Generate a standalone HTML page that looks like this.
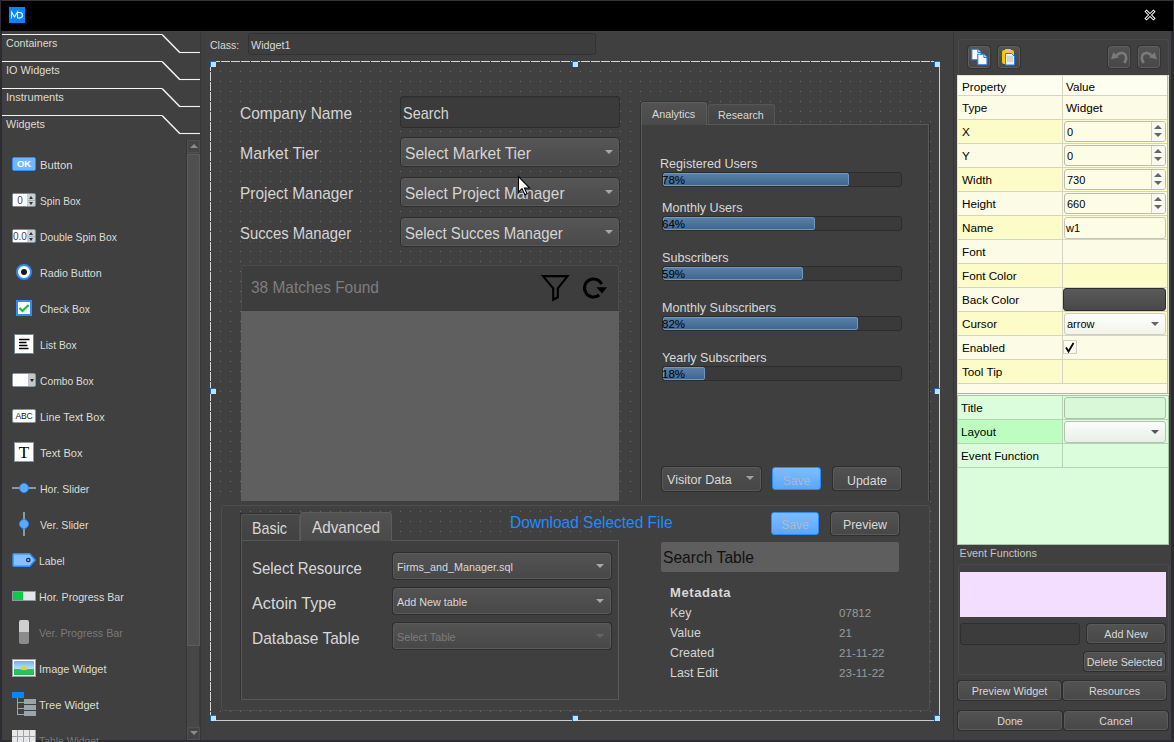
<!DOCTYPE html>
<html><head><meta charset="utf-8">
<style>
*{margin:0;padding:0;box-sizing:border-box}
html,body{width:1174px;height:742px;overflow:hidden;background:#404040;font-family:"Liberation Sans",sans-serif;color:#d6d6d6;position:relative}
.a{position:absolute}
.tx{position:absolute;line-height:1;white-space:nowrap}
svg{overflow:visible}
</style></head><body>
<div class="a" style="left:0px;top:0px;width:1174px;height:742px;background:#404040"></div>
<div class="a" style="left:0px;top:0px;width:1174px;height:1px;background:#34343a"></div>
<div class="a" style="left:0px;top:0px;width:2px;height:742px;background:#2c2c32"></div>
<div class="a" style="left:1171px;top:0px;width:3px;height:742px;background:#2c2c32"></div>
<div class="a" style="left:0px;top:740px;width:1174px;height:2px;background:#2c2c32"></div>
<div class="a" style="left:1px;top:1px;width:1172px;height:30px;background:#000"></div>
<div class="a" style="left:9px;top:7px;width:16px;height:16px;background:#0a84ff"></div>
<svg class="a" style="left:9px;top:7px" width="16" height="16" viewBox="0 0 16 16"><path d="M2.5 11.5V5L5.5 10L8.5 5V11.5M8.5 5.5H10.5Q13.5 5.5 13.5 8.3Q13.5 11 10.5 11H8.5" fill="none" stroke="#fff" stroke-width="1.05"/></svg>
<svg class="a" style="left:1143px;top:8px" width="14" height="14" viewBox="0 0 14 14"><path d="M3.6 3.6L10.4 10.4M10.4 3.6L3.6 10.4" stroke="#fff" stroke-width="3.1" stroke-linecap="square"/><path d="M3.6 3.6L10.4 10.4M10.4 3.6L3.6 10.4" stroke="#000" stroke-width="1.2" stroke-linecap="square"/></svg>
<svg class="a" style="left:0;top:0" width="200" height="140" viewBox="0 0 200 140"><g fill="none" stroke="#f4f4f4"><path d="M2 34.5H162.5" stroke-width="1.1"/><path d="M162.3 34.8L179.5 52.2" stroke-width="1.5"/><path d="M179 52.5H200" stroke-width="1.1"/><path d="M2 61.5H162.5" stroke-width="1.1"/><path d="M162.3 61.8L179.5 79.2" stroke-width="1.5"/><path d="M179 79.5H200" stroke-width="1.1"/><path d="M2 88.5H162.5" stroke-width="1.1"/><path d="M162.3 88.8L179.5 106.2" stroke-width="1.5"/><path d="M179 106.5H200" stroke-width="1.1"/><path d="M2 115.5H162.5" stroke-width="1.1"/><path d="M162.3 115.8L179.5 133.2" stroke-width="1.5"/><path d="M179 133.5H200" stroke-width="1.1"/></g></svg>
<div class="tx" style="left:5.60px;top:37.69px;font-size:11px;color:#dcdcd4;transform:scaleX(0.9664);transform-origin:0 0;">Containers</div>
<div class="tx" style="left:5.60px;top:64.69px;font-size:11px;color:#dcdcd4;transform:scaleX(0.9872);transform-origin:0 0;">IO Widgets</div>
<div class="tx" style="left:5.60px;top:91.69px;font-size:11px;color:#dcdcd4;transform:scaleX(1.0057);transform-origin:0 0;">Instruments</div>
<div class="tx" style="left:5.60px;top:118.69px;font-size:11px;color:#dcdcd4;transform:scaleX(0.9771);transform-origin:0 0;">Widgets</div>
<div class="a" style="left:186px;top:140px;width:14px;height:600px;background:#474747;border-left:1px solid #363636;border-right:1px solid #3a3a3a"></div>
<div class="a" style="left:187px;top:140px;width:13px;height:13px;background:#444;border:1px solid #505050"></div>
<div class="a" style="left:190px;top:144px;width:0;height:0;border-left:4.0px solid transparent;border-right:4.0px solid transparent;border-bottom:4px solid #8c8c8c"></div>
<div class="a" style="left:186px;top:154px;width:1px;height:492px;background:#363636"></div>
<div class="a" style="left:187px;top:154px;width:13px;height:492px;background:#4f4f4f;border:1px solid #5c5c5c"></div>
<div class="a" style="left:187px;top:727px;width:13px;height:13px;background:#444;border:1px solid #505050"></div>
<div class="a" style="left:190px;top:731px;width:0;height:0;border-left:4.0px solid transparent;border-right:4.0px solid transparent;border-top:4px solid #8c8c8c"></div>
<div class="tx" style="left:39.60px;top:159.69px;font-size:11px;color:#dcdcd4;transform:scaleX(1.0192);transform-origin:0 0;">Button</div>
<div class="tx" style="left:39.60px;top:195.69px;font-size:11px;color:#dcdcd4;transform:scaleX(0.9238);transform-origin:0 0;">Spin Box</div>
<div class="tx" style="left:39.60px;top:231.69px;font-size:11px;color:#dcdcd4;transform:scaleX(0.9372);transform-origin:0 0;">Double Spin Box</div>
<div class="tx" style="left:39.60px;top:267.69px;font-size:11px;color:#dcdcd4;transform:scaleX(0.9704);transform-origin:0 0;">Radio Button</div>
<div class="tx" style="left:39.60px;top:303.69px;font-size:11px;color:#dcdcd4;transform:scaleX(0.9382);transform-origin:0 0;">Check Box</div>
<div class="tx" style="left:39.60px;top:339.69px;font-size:11px;color:#dcdcd4;transform:scaleX(0.9385);transform-origin:0 0;">List Box</div>
<div class="tx" style="left:39.60px;top:375.69px;font-size:11px;color:#dcdcd4;transform:scaleX(0.9343);transform-origin:0 0;">Combo Box</div>
<div class="tx" style="left:39.60px;top:411.69px;font-size:11px;color:#dcdcd4;transform:scaleX(0.9828);transform-origin:0 0;">Line Text Box</div>
<div class="tx" style="left:39.60px;top:447.69px;font-size:11px;color:#dcdcd4;transform:scaleX(1.0098);transform-origin:0 0;">Text Box</div>
<div class="tx" style="left:39.60px;top:483.69px;font-size:11px;color:#dcdcd4;transform:scaleX(0.9597);transform-origin:0 0;">Hor. Slider</div>
<div class="tx" style="left:39.60px;top:519.69px;font-size:11px;color:#dcdcd4;transform:scaleX(0.9669);transform-origin:0 0;">Ver. Slider</div>
<div class="tx" style="left:39.10px;top:555.69px;font-size:11px;color:#dcdcd4;transform:scaleX(0.9481);transform-origin:0 0;">Label</div>
<div class="tx" style="left:39.10px;top:591.69px;font-size:11px;color:#dcdcd4;transform:scaleX(0.9708);transform-origin:0 0;">Hor. Progress Bar</div>
<div class="tx" style="left:39.10px;top:627.69px;font-size:11px;color:#7a7a7a;transform:scaleX(0.9723);transform-origin:0 0;">Ver. Progress Bar</div>
<div class="tx" style="left:39.10px;top:663.69px;font-size:11px;color:#dcdcd4;transform:scaleX(0.9945);transform-origin:0 0;">Image Widget</div>
<div class="tx" style="left:39.10px;top:699.69px;font-size:11px;color:#dcdcd4;transform:scaleX(1.0049);transform-origin:0 0;">Tree Widget</div>
<div class="tx" style="left:39.10px;top:735.69px;font-size:11px;color:#7a7a7a;transform:scaleX(0.9437);transform-origin:0 0;">Table Widget</div>
<div class="a" style="left:12px;top:157px;width:24px;height:14px;border:1px solid #2a8cff;border-radius:2px;background:#72b6ff"></div>
<div class="tx" style="left:12px;top:159px;width:24px;text-align:center;font-size:9.5px;font-weight:bold;color:#fff">OK</div>
<div class="a" style="left:12px;top:193px;width:24px;height:14px;border:1px solid #7f8e95;border-radius:2px;background:#c9d1d5"></div>
<div class="a" style="left:13px;top:194px;width:14px;height:12px;background:#fff"></div>
<div class="tx" style="left:13px;top:196px;width:14px;overflow:hidden;text-align:center;font-size:10px;color:#444">0</div>
<div class="a" style="left:29px;top:196px;width:0;height:0;border-left:2.5px solid transparent;border-right:2.5px solid transparent;border-bottom:3px solid #333"></div>
<div class="a" style="left:29px;top:202px;width:0;height:0;border-left:2.5px solid transparent;border-right:2.5px solid transparent;border-top:3px solid #333"></div>
<div class="a" style="left:28px;top:200px;width:7px;height:1px;background:#aab4b8"></div>
<div class="a" style="left:12px;top:229px;width:24px;height:14px;border:1px solid #7f8e95;border-radius:2px;background:#c9d1d5"></div>
<div class="a" style="left:13px;top:230px;width:14px;height:12px;background:#fff"></div>
<div class="tx" style="left:13px;top:232px;width:14px;overflow:hidden;text-align:left;font-size:10px;color:#444">0.0</div>
<div class="a" style="left:29px;top:232px;width:0;height:0;border-left:2.5px solid transparent;border-right:2.5px solid transparent;border-bottom:3px solid #333"></div>
<div class="a" style="left:29px;top:238px;width:0;height:0;border-left:2.5px solid transparent;border-right:2.5px solid transparent;border-top:3px solid #333"></div>
<div class="a" style="left:28px;top:236px;width:7px;height:1px;background:#aab4b8"></div>
<div class="a" style="left:16px;top:264px;width:16px;height:16px;border-radius:50%;border:2px solid #2a8cff;background:#fff"></div>
<div class="a" style="left:21px;top:269px;width:6px;height:6px;border-radius:50%;background:#1a1a1a"></div>
<div class="a" style="left:16px;top:300px;width:16px;height:16px;border:2px solid #2a8cff;background:#fff"></div>
<svg class="a" style="left:16px;top:300px" width="16" height="16"><path d="M3.5 8L6.5 11L12.5 5" fill="none" stroke="#10c040" stroke-width="2.2"/></svg>
<div class="a" style="left:14px;top:334px;width:20px;height:20px;border:1px solid #6f8590;background:#fff"></div>
<svg class="a" style="left:14px;top:334px" width="20" height="20"><g stroke="#000" stroke-width="1.3" stroke-linecap="round"><path d="M5.5 5.5H15"/><path d="M5.5 8.5H12"/><path d="M5.5 11.5H13"/><path d="M5.5 14.5H14"/></g></svg>
<div class="a" style="left:12px;top:373px;width:24px;height:14px;border:1px solid #8a989e;border-radius:2px;background:#c0c8cc"></div>
<div class="a" style="left:13px;top:374px;width:14.5px;height:12px;background:#fff"></div>
<div class="a" style="left:29.5px;top:379px;width:0;height:0;border-left:2.5px solid transparent;border-right:2.5px solid transparent;border-top:3px solid #222"></div>
<div class="a" style="left:12px;top:409px;width:24px;height:14px;border:1px solid #8a989e;border-radius:2px;background:#fff"></div>
<div class="tx" style="left:12px;top:412px;width:24px;text-align:center;font-size:8.6px;letter-spacing:-0.3px;color:#222">ABC</div>
<div class="a" style="left:14px;top:442px;width:20px;height:20px;border:1px solid #8a989e;background:#fff"></div>
<div class="tx" style="left:14px;top:444px;width:20px;text-align:center;font-family:'Liberation Serif',serif;font-size:17px;color:#000">T</div>
<div class="a" style="left:12px;top:487px;width:24px;height:2px;background:#8a9aa0"></div>
<div class="a" style="left:19px;top:483px;width:10px;height:10px;border-radius:50%;background:#5aa9ff;border:1px solid #2a8cff"></div>
<div class="a" style="left:23px;top:512px;width:2px;height:24px;background:#8a9aa0"></div>
<div class="a" style="left:19px;top:519px;width:10px;height:10px;border-radius:50%;background:#5aa9ff;border:1px solid #2a8cff"></div>
<svg class="a" style="left:12px;top:553px" width="25" height="15"><path d="M1 1.5Q1 0.8 1.8 0.8H17.8L23.2 7L17.8 13.2H1.8Q1 13.2 1 12.5Z" fill="#86c0ff" stroke="#2a8cff" stroke-width="1.5" stroke-linejoin="round"/><circle cx="16.3" cy="7" r="1.7" fill="#8cc4ff" stroke="#1a3050" stroke-width="1.3"/></svg>
<div class="a" style="left:12px;top:591px;width:24px;height:10px;border:1px solid #8a9aa0;background:#e4e6e8"></div>
<div class="a" style="left:13px;top:592px;width:10px;height:8px;background:#10c848"></div>
<div class="a" style="left:19px;top:620px;width:10px;height:24px;border-radius:2px;background:linear-gradient(#cfcfcf 50%,#8c8c8c 50%)"></div>
<div class="a" style="left:12px;top:659px;width:24px;height:18px;border:1px solid #9aa4aa;background:#fff"></div>
<div class="a" style="left:14px;top:661px;width:20px;height:14px;background:linear-gradient(#6fb3f5,#bcdcf8 55%,#2ec85a 55%,#20c050)"></div>
<div class="a" style="left:21px;top:666px;width:6px;height:4px;border-radius:3px 3px 0 0;background:#f0d020"></div>
<div class="a" style="left:12px;top:692px;width:12px;height:6px;background:#0a84ff"></div>
<div class="a" style="left:17px;top:698px;width:1px;height:17px;background:#9aa4aa"></div>
<div class="a" style="left:17px;top:702px;width:7px;height:1px;background:#9aa4aa"></div>
<div class="a" style="left:17px;top:708px;width:7px;height:1px;background:#9aa4aa"></div>
<div class="a" style="left:17px;top:714px;width:7px;height:1px;background:#9aa4aa"></div>
<div class="a" style="left:24px;top:699px;width:12px;height:5px;background:#9aa4aa"></div>
<div class="a" style="left:24px;top:705px;width:12px;height:5px;background:#9aa4aa"></div>
<div class="a" style="left:24px;top:711px;width:12px;height:5px;background:#9aa4aa"></div>
<div class="a" style="left:12px;top:730px;width:24px;height:12px;background:repeating-linear-gradient(90deg,#e8e8e8 0 5px,#9aa4aa 5px 6px)"></div>
<div class="a" style="left:12px;top:736px;width:24px;height:1px;background:#9aa4aa"></div>
<div class="a" style="left:200px;top:31px;width:1px;height:709px;background:#363636"></div>
<div class="a" style="left:953px;top:31px;width:1px;height:709px;background:#363636"></div>
<div class="tx" style="left:210px;top:40.11px;font-size:10.5px;color:#d8d8d8;">Class:</div>
<div class="a" style="left:248px;top:33px;width:348px;height:22px;border:1px solid #323232;border-radius:3px;background:#3d3d3d"></div>
<div class="tx" style="left:251px;top:39.86px;font-size:10.8px;color:#d8d8d8;">Widget1</div>
<div class="a" style="left:220px;top:71px;width:719px;height:649px;background-image:radial-gradient(circle at 0.5px 0.5px,#6c6c6c 0.75px,transparent 0.85px);background-size:10px 10px"></div>
<div class="a" style="left:210px;top:61px;width:729px;height:1px;background:repeating-linear-gradient(90deg,transparent 0 1px,#d4d4d4 1px 10px)"></div>
<div class="a" style="left:210px;top:61px;width:1px;height:659px;background:repeating-linear-gradient(180deg,transparent 0 1px,#d4d4d4 1px 10px)"></div>
<div class="a" style="left:939px;top:61px;width:1px;height:660px;background:#cccccc"></div>
<div class="a" style="left:210px;top:720px;width:730px;height:1px;background:#cccccc"></div>
<div class="tx" style="left:240.40px;top:104.61px;font-size:17px;color:#d4d4d4;transform:scaleX(0.9119);transform-origin:0 0;">Company Name</div>
<div class="tx" style="left:240.40px;top:144.61px;font-size:17px;color:#d4d4d4;transform:scaleX(0.9294);transform-origin:0 0;">Market Tier</div>
<div class="tx" style="left:240.40px;top:184.61px;font-size:17px;color:#d4d4d4;transform:scaleX(0.9062);transform-origin:0 0;">Project Manager</div>
<div class="tx" style="left:240.40px;top:224.61px;font-size:17px;color:#d4d4d4;transform:scaleX(0.8724);transform-origin:0 0;">Succes Manager</div>
<div class="a" style="left:400px;top:96px;width:220px;height:32px;border:1px solid #2e2e2e;border-radius:3px;background:#3b3b3b;box-shadow:inset 0 1px 0 #363636"></div>
<div class="tx" style="left:403.20px;top:104.61px;font-size:17px;color:#d4d4d4;transform:scaleX(0.8499);transform-origin:0 0;">Search</div>
<div class="a" style="left:400px;top:137px;width:220px;height:30px;border:1px solid #2e2e2e;border-radius:4px;background:linear-gradient(#565656,#4a4a4a);box-shadow:inset 0 0 0 1px #595959"></div>
<div class="tx" style="left:405.30px;top:144.61px;font-size:17px;color:#d4d4d4;transform:scaleX(0.9196);transform-origin:0 0;">Select Market Tier</div>
<div class="a" style="left:605px;top:150px;width:0;height:0;border-left:4.0px solid transparent;border-right:4.0px solid transparent;border-top:4px solid #a8a8a8"></div>
<div class="a" style="left:400px;top:177px;width:220px;height:30px;border:1px solid #2e2e2e;border-radius:4px;background:linear-gradient(#565656,#4a4a4a);box-shadow:inset 0 0 0 1px #595959"></div>
<div class="tx" style="left:405.30px;top:184.61px;font-size:17px;color:#d4d4d4;transform:scaleX(0.9026);transform-origin:0 0;">Select Project Manager</div>
<div class="a" style="left:605px;top:190px;width:0;height:0;border-left:4.0px solid transparent;border-right:4.0px solid transparent;border-top:4px solid #a8a8a8"></div>
<div class="a" style="left:400px;top:217px;width:220px;height:30px;border:1px solid #2e2e2e;border-radius:4px;background:linear-gradient(#565656,#4a4a4a);box-shadow:inset 0 0 0 1px #595959"></div>
<div class="tx" style="left:405.30px;top:224.61px;font-size:17px;color:#d4d4d4;transform:scaleX(0.8790);transform-origin:0 0;">Select Succes Manager</div>
<div class="a" style="left:605px;top:230px;width:0;height:0;border-left:4.0px solid transparent;border-right:4.0px solid transparent;border-top:4px solid #a8a8a8"></div>
<div class="a" style="left:241px;top:265px;width:378px;height:46px;background:#3d3d3d;border:1px solid #4b4b4b;border-bottom:none;border-radius:2px 2px 0 0"></div>
<div class="tx" style="left:250.50px;top:279.11px;font-size:17px;color:#7e7e7e;transform:scaleX(0.9088);transform-origin:0 0;">38 Matches Found</div>
<svg class="a" style="left:538px;top:272px" width="34" height="32" viewBox="0 0 34 32"><path d="M5 4.1H29.6L19.8 16.3V25.3L15.2 27.7V16.3Z" fill="none" stroke="#000" stroke-width="2.1" stroke-linejoin="miter" stroke-miterlimit="3"/></svg>
<svg class="a" style="left:580px;top:275px" width="30" height="28" viewBox="0 0 30 28"><path d="M21.66 9.2A9 9 0 1 0 19.16 20" fill="none" stroke="#000" stroke-width="3"/><path d="M16.3 12.2L27 12.2L22 18.4Z" fill="#000"/></svg>
<div class="a" style="left:241px;top:311px;width:378px;height:190px;background:#5f5f5f"></div>
<div class="a" style="left:241px;top:310px;width:378px;height:1px;background:#3a3a3a"></div>
<div class="a" style="left:640px;top:102px;width:1px;height:399px;background:#333"></div>
<div class="a" style="left:641px;top:101px;width:67px;height:1px;background:#333"></div>
<div class="a" style="left:641px;top:124px;width:288px;height:377px;border-left:1px solid #575757;border-top:1px solid #575757;background:#3f3f3f"></div>
<div class="a" style="left:928px;top:124px;width:1px;height:377px;background:#5a5a5a"></div>
<div class="a" style="left:929px;top:124px;width:1px;height:377px;background:#2e2e2e"></div>
<div class="a" style="left:708px;top:104px;width:67px;height:20px;border:1px solid #565656;border-bottom:none;border-radius:3px 3px 0 0;background:linear-gradient(#4a4a4a,#434343)"></div>
<div class="a" style="left:641px;top:102px;width:66px;height:23px;border:1px solid #5c5c5c;border-bottom:none;border-radius:3px 3px 0 0;background:linear-gradient(#525252,#4a4a4a)"></div>
<div class="a" style="left:642px;top:124px;width:64px;height:1px;background:#4a4a4a"></div>
<div class="tx" style="left:652px;top:108.66px;font-size:10.8px;color:#d8d8d8;">Analytics</div>
<div class="tx" style="left:718px;top:110.44px;font-size:10.7px;color:#d8d8d8;">Research</div>
<div class="tx" style="left:660px;top:158.33px;font-size:12.6px;color:#d8d8d8;">Registered Users</div>
<div class="a" style="left:662px;top:172px;width:240px;height:15px;border:1px solid #2c2c2c;border-radius:3px;background:#3a3a3a"></div>
<div class="a" style="left:663px;top:173px;width:186px;height:13px;border:1px solid #7097c0;border-radius:2px;background:linear-gradient(#5a7fa6,#42678f)"></div>
<div class="tx" style="left:662px;top:175.27px;font-size:11.5px;color:#000;">78%</div>
<div class="tx" style="left:662px;top:202.33px;font-size:12.6px;color:#d8d8d8;">Monthly Users</div>
<div class="a" style="left:662px;top:216px;width:240px;height:15px;border:1px solid #2c2c2c;border-radius:3px;background:#3a3a3a"></div>
<div class="a" style="left:663px;top:217px;width:152px;height:13px;border:1px solid #7097c0;border-radius:2px;background:linear-gradient(#5a7fa6,#42678f)"></div>
<div class="tx" style="left:662px;top:219.27px;font-size:11.5px;color:#000;">64%</div>
<div class="tx" style="left:662px;top:252.33px;font-size:12.6px;color:#d8d8d8;">Subscribers</div>
<div class="a" style="left:662px;top:266px;width:240px;height:15px;border:1px solid #2c2c2c;border-radius:3px;background:#3a3a3a"></div>
<div class="a" style="left:663px;top:267px;width:140px;height:13px;border:1px solid #7097c0;border-radius:2px;background:linear-gradient(#5a7fa6,#42678f)"></div>
<div class="tx" style="left:662px;top:269.27px;font-size:11.5px;color:#000;">59%</div>
<div class="tx" style="left:662px;top:302.33px;font-size:12.6px;color:#d8d8d8;">Monthly Subscribers</div>
<div class="a" style="left:662px;top:316px;width:240px;height:15px;border:1px solid #2c2c2c;border-radius:3px;background:#3a3a3a"></div>
<div class="a" style="left:663px;top:317px;width:195px;height:13px;border:1px solid #7097c0;border-radius:2px;background:linear-gradient(#5a7fa6,#42678f)"></div>
<div class="tx" style="left:662px;top:319.27px;font-size:11.5px;color:#000;">82%</div>
<div class="tx" style="left:662px;top:352.33px;font-size:12.6px;color:#d8d8d8;">Yearly Subscribers</div>
<div class="a" style="left:662px;top:366px;width:240px;height:15px;border:1px solid #2c2c2c;border-radius:3px;background:#3a3a3a"></div>
<div class="a" style="left:663px;top:367px;width:42px;height:13px;border:1px solid #7097c0;border-radius:2px;background:linear-gradient(#5a7fa6,#42678f)"></div>
<div class="tx" style="left:662px;top:369.27px;font-size:11.5px;color:#000;">18%</div>
<div class="a" style="left:661px;top:466px;width:101px;height:26px;border-radius:4px;background:#2e2e2e"></div>
<div class="a" style="left:662px;top:467px;width:99px;height:24px;border:1px solid #5a5a5a;border-radius:3px;background:linear-gradient(#4e4e4e,#474747)"></div>
<div class="tx" style="left:667px;top:474.33px;font-size:12.6px;color:#d8d8d8;">Visitor Data</div>
<div class="a" style="left:746px;top:476px;width:0;height:0;border-left:4.0px solid transparent;border-right:4.0px solid transparent;border-top:4px solid #a0a0a0"></div>
<div class="a" style="left:772px;top:467px;width:49px;height:23px;border:1px solid #2a8cff;border-radius:3px;background:linear-gradient(#7dbdff,#5aa6ff)"></div>
<div class="tx" style="left:772px;width:49px;text-align:center;top:474.84px;font-size:12px;color:#b4b8bc;">Save</div>
<div class="a" style="left:832px;top:466px;width:70px;height:25px;border-radius:4px;background:#2e2e2e"></div>
<div class="a" style="left:833px;top:467px;width:68px;height:23px;border:1px solid #5a5a5a;border-radius:3px;background:linear-gradient(#525252,#484848)"></div>
<div class="tx" style="left:833px;width:68px;text-align:center;top:474.50px;font-size:12.4px;color:#d8d8d8;">Update</div>
<div class="a" style="left:219px;top:501px;width:710px;height:3px;background:#404040"></div>
<div class="a" style="left:216px;top:504px;width:6px;height:206px;background:#404040"></div>
<div class="a" style="left:221px;top:505px;width:709px;height:206px;border:1px solid #4e4e4e;border-radius:3px;background:#404040"></div>
<div class="a" style="left:240px;top:511px;width:376px;height:190px;background-image:radial-gradient(circle at 0.5px 0.5px,#6c6c6c 0.75px,transparent 0.85px);background-size:10px 10px"></div>
<div class="a" style="left:241px;top:540px;width:378px;height:160px;border:1px solid #565656;background:#3f3f3f"></div>
<div class="a" style="left:618px;top:540px;width:1px;height:160px;background:#5a5a5a"></div>
<div class="a" style="left:240px;top:512px;width:1px;height:188px;background:#333"></div>
<div class="a" style="left:241px;top:513px;width:151px;height:1px;background:#333"></div>
<div class="a" style="left:241px;top:514px;width:59px;height:26px;border:1px solid #555;border-bottom:none;border-radius:3px 3px 0 0;background:linear-gradient(#484848,#424242)"></div>
<div class="a" style="left:300px;top:512px;width:92px;height:29px;border:1px solid #5c5c5c;border-bottom:none;border-radius:3px 3px 0 0;background:linear-gradient(#525252,#4a4a4a)"></div>
<div class="a" style="left:301px;top:540px;width:90px;height:1px;background:#4a4a4a"></div>
<div class="tx" style="left:252.30px;top:519.61px;font-size:17px;color:#d8d8d8;transform:scaleX(0.8421);transform-origin:0 0;">Basic</div>
<div class="tx" style="left:312.00px;top:519.11px;font-size:17px;color:#d8d8d8;transform:scaleX(0.8989);transform-origin:0 0;">Advanced</div>
<div class="tx" style="left:510.00px;top:513.61px;font-size:17px;color:#1e8cff;transform:scaleX(0.9099);transform-origin:0 0;">Download Selected File</div>
<div class="a" style="left:771px;top:512px;width:48px;height:23px;border:1px solid #2a8cff;border-radius:3px;background:linear-gradient(#7dbdff,#5aa6ff)"></div>
<div class="tx" style="left:771px;width:48px;text-align:center;top:518.84px;font-size:12px;color:#b4b8bc;">Save</div>
<div class="a" style="left:830px;top:511px;width:70px;height:25px;border-radius:4px;background:#2e2e2e"></div>
<div class="a" style="left:831px;top:512px;width:68px;height:23px;border:1px solid #5a5a5a;border-radius:3px;background:linear-gradient(#525252,#484848)"></div>
<div class="tx" style="left:831px;width:68px;text-align:center;top:518.50px;font-size:12.4px;color:#d8d8d8;">Preview</div>
<div class="tx" style="left:252.40px;top:560.11px;font-size:17px;color:#d8d8d8;transform:scaleX(0.8797);transform-origin:0 0;">Select Resource</div>
<div class="tx" style="left:252.40px;top:595.11px;font-size:17px;color:#d8d8d8;transform:scaleX(0.9527);transform-origin:0 0;">Actoin Type</div>
<div class="tx" style="left:252.40px;top:630.11px;font-size:17px;color:#d8d8d8;transform:scaleX(0.9125);transform-origin:0 0;">Database Table</div>
<div class="a" style="left:392px;top:552px;width:220px;height:28px;border-radius:4px;background:#2e2e2e"></div>
<div class="a" style="left:393px;top:553px;width:218px;height:26px;border:1px solid #5a5a5a;border-radius:3px;background:linear-gradient(#535353,#484848)"></div>
<div class="tx" style="left:397px;top:561.86px;font-size:10.8px;color:#d8d8d8;">Firms_and_Manager.sql</div>
<div class="a" style="left:596px;top:564px;width:0;height:0;border-left:4.0px solid transparent;border-right:4.0px solid transparent;border-top:4px solid #a8a8a8"></div>
<div class="a" style="left:392px;top:587px;width:220px;height:28px;border-radius:4px;background:#2e2e2e"></div>
<div class="a" style="left:393px;top:588px;width:218px;height:26px;border:1px solid #5a5a5a;border-radius:3px;background:linear-gradient(#535353,#484848)"></div>
<div class="tx" style="left:397px;top:596.86px;font-size:10.8px;color:#d8d8d8;">Add New table</div>
<div class="a" style="left:596px;top:599px;width:0;height:0;border-left:4.0px solid transparent;border-right:4.0px solid transparent;border-top:4px solid #a8a8a8"></div>
<div class="a" style="left:392px;top:622px;width:220px;height:28px;border-radius:4px;background:#2e2e2e"></div>
<div class="a" style="left:393px;top:623px;width:218px;height:26px;border:1px solid #5a5a5a;border-radius:3px;background:linear-gradient(#535353,#484848)"></div>
<div class="tx" style="left:397px;top:631.86px;font-size:10.8px;color:#7c7c7c;">Select Table</div>
<div class="a" style="left:596px;top:634px;width:0;height:0;border-left:4.0px solid transparent;border-right:4.0px solid transparent;border-top:4px solid #666"></div>
<div class="a" style="left:661px;top:542px;width:238px;height:30px;border-radius:2px;background:#5e5e5e"></div>
<div class="tx" style="left:663.10px;top:550.45px;font-size:16.6px;color:#111;transform:scaleX(0.9419);transform-origin:0 0;">Search Table</div>
<div class="tx" style="left:670px;top:585.80px;font-size:13px;color:#d8d8d8;font-weight:bold;letter-spacing:0.6px">Metadata</div>
<div class="tx" style="left:670px;top:606.50px;font-size:12.4px;color:#d4d4d4;">Key</div>
<div class="tx" style="left:839px;top:607.18px;font-size:11.6px;color:#9a9a9a;">07812</div>
<div class="tx" style="left:670px;top:626.50px;font-size:12.4px;color:#d4d4d4;">Value</div>
<div class="tx" style="left:839px;top:627.18px;font-size:11.6px;color:#9a9a9a;">21</div>
<div class="tx" style="left:670px;top:646.50px;font-size:12.4px;color:#d4d4d4;">Created</div>
<div class="tx" style="left:839px;top:647.18px;font-size:11.6px;color:#9a9a9a;">21-11-22</div>
<div class="tx" style="left:670px;top:666.50px;font-size:12.4px;color:#d4d4d4;">Last Edit</div>
<div class="tx" style="left:839px;top:667.18px;font-size:11.6px;color:#9a9a9a;">23-11-22</div>
<div class="a" style="left:210px;top:61px;width:6px;height:6px;background:#bfe3ff;border-top:1px solid #1a6fc0;border-left:1px solid #1a6fc0"></div>
<div class="a" style="left:572px;top:61px;width:6px;height:6px;background:#bfe3ff;border-top:1px solid #1a6fc0;border-left:1px solid #1a6fc0"></div>
<div class="a" style="left:934px;top:61px;width:6px;height:6px;background:#bfe3ff;border-top:1px solid #1a6fc0;border-left:1px solid #1a6fc0"></div>
<div class="a" style="left:210px;top:388px;width:6px;height:6px;background:#bfe3ff;border-top:1px solid #1a6fc0;border-left:1px solid #1a6fc0"></div>
<div class="a" style="left:934px;top:388px;width:6px;height:6px;background:#bfe3ff;border-top:1px solid #1a6fc0;border-left:1px solid #1a6fc0"></div>
<div class="a" style="left:210px;top:715px;width:6px;height:6px;background:#bfe3ff;border-top:1px solid #1a6fc0;border-left:1px solid #1a6fc0"></div>
<div class="a" style="left:572px;top:715px;width:6px;height:6px;background:#bfe3ff;border-top:1px solid #1a6fc0;border-left:1px solid #1a6fc0"></div>
<div class="a" style="left:934px;top:715px;width:6px;height:6px;background:#bfe3ff;border-top:1px solid #1a6fc0;border-left:1px solid #1a6fc0"></div>
<svg class="a" style="left:517px;top:175px" width="16" height="24" viewBox="0 0 16 24"><path d="M1.5 1.5V17.2L5 13.8L7.9 19.8L10.1 18.8L7.4 13H12.6Z" fill="#fff" stroke="#000" stroke-width="1.1"/></svg>
<div class="a" style="left:958px;top:39px;width:211px;height:36px;border:1px solid #4a4a4a;border-bottom:none;border-radius:3px 3px 0 0"></div>
<div class="a" style="left:967px;top:45px;width:24px;height:24px;border-radius:4px;background:#333"></div>
<div class="a" style="left:968px;top:46px;width:22px;height:22px;border:1px solid #5e5e5e;border-radius:3px;background:linear-gradient(#535353,#474747)"></div>
<div class="a" style="left:997px;top:45px;width:24px;height:24px;border-radius:4px;background:#333"></div>
<div class="a" style="left:998px;top:46px;width:22px;height:22px;border:1px solid #5e5e5e;border-radius:3px;background:linear-gradient(#535353,#474747)"></div>
<div class="a" style="left:1107px;top:45px;width:24px;height:24px;border-radius:4px;background:#333"></div>
<div class="a" style="left:1108px;top:46px;width:22px;height:22px;border:1px solid #5e5e5e;border-radius:3px;background:linear-gradient(#535353,#474747)"></div>
<div class="a" style="left:1137px;top:45px;width:24px;height:24px;border-radius:4px;background:#333"></div>
<div class="a" style="left:1138px;top:46px;width:22px;height:22px;border:1px solid #5e5e5e;border-radius:3px;background:linear-gradient(#535353,#474747)"></div>
<svg class="a" style="left:968px;top:46px" width="22" height="22" viewBox="0 0 22 22"><path d="M3.8 3.3H9.8L13 6.5V13.8H3.8Z" fill="#fff" stroke="#1e7ff0" stroke-width="1.1"/><path d="M9.8 3.3V6.5H13" fill="#cfe3ff" stroke="#1e7ff0" stroke-width="1"/><path d="M9.8 8.3H15.8L19 11.5V18.8H9.8Z" fill="#fff" stroke="#1e7ff0" stroke-width="1.1"/><path d="M15.8 8.3V11.5H19" fill="#cfe3ff" stroke="#1e7ff0" stroke-width="1"/></svg>
<svg class="a" style="left:998px;top:46px" width="22" height="22" viewBox="0 0 22 22"><rect x="4" y="4" width="12" height="14" rx="2" fill="#f5c800"/><rect x="7" y="3" width="6" height="3" rx="1" fill="#c8c8c8"/><path d="M7.5 7.5H13.5L16.5 10.5V19H7.5Z" fill="#eee" stroke="#1e7ff0" stroke-width="1"/><path d="M9 11H15M9 13H15M9 15H15" stroke="#bbb" stroke-width="1"/></svg>
<svg class="a" style="left:1108px;top:46px" width="22" height="22" viewBox="0 0 22 22"><path d="M8.5 9.5Q13 4.8 16.8 8.2Q19.8 11.5 16.3 17" fill="none" stroke="#7a7a7a" stroke-width="2.6"/><path d="M3 13.2L5.3 6.3L11 11.6Z" fill="#7a7a7a"/></svg>
<svg class="a" style="left:1138px;top:46px" width="22" height="22" viewBox="0 0 22 22"><path d="M13.5 9.5Q9 4.8 5.2 8.2Q2.2 11.5 5.7 17" fill="none" stroke="#7a7a7a" stroke-width="2.6"/><path d="M19 13.2L16.7 6.3L11 11.6Z" fill="#7a7a7a"/></svg>
<div class="a" style="left:957px;top:75px;width:212px;height:320px;background:#fcfce8;border:1px solid #e2e2d0"></div>
<div class="a" style="left:958px;top:76px;width:210px;height:19px;background:#fdfdf0"></div>
<div class="a" style="left:958px;top:95px;width:210px;height:1px;background:#d4d4c0"></div>
<div class="a" style="left:1062px;top:76px;width:1px;height:307px;background:#d4d4c0"></div>
<div class="tx" style="left:962px;top:81.10px;font-size:11.7px;color:#000;">Property</div>
<div class="tx" style="left:1066px;top:81.10px;font-size:11.7px;color:#000;">Value</div>
<div class="a" style="left:958px;top:96px;width:104px;height:23px;background:#fcfce6"></div>
<div class="a" style="left:1063px;top:96px;width:105px;height:23px;background:#fcfce6"></div>
<div class="a" style="left:958px;top:119px;width:210px;height:1px;background:#d4d4c0"></div>
<div class="tx" style="left:962px;top:102.10px;font-size:11.7px;color:#000;">Type</div>
<div class="a" style="left:958px;top:120px;width:104px;height:23px;background:#fdfcc9"></div>
<div class="a" style="left:1063px;top:120px;width:105px;height:23px;background:#fdfcc9"></div>
<div class="a" style="left:958px;top:143px;width:210px;height:1px;background:#d4d4c0"></div>
<div class="tx" style="left:962px;top:126.10px;font-size:11.7px;color:#000;">X</div>
<div class="a" style="left:958px;top:144px;width:104px;height:23px;background:#fcfce6"></div>
<div class="a" style="left:1063px;top:144px;width:105px;height:23px;background:#fcfce6"></div>
<div class="a" style="left:958px;top:167px;width:210px;height:1px;background:#d4d4c0"></div>
<div class="tx" style="left:962px;top:150.10px;font-size:11.7px;color:#000;">Y</div>
<div class="a" style="left:958px;top:168px;width:104px;height:23px;background:#fdfcc9"></div>
<div class="a" style="left:1063px;top:168px;width:105px;height:23px;background:#fdfcc9"></div>
<div class="a" style="left:958px;top:191px;width:210px;height:1px;background:#d4d4c0"></div>
<div class="tx" style="left:962px;top:174.10px;font-size:11.7px;color:#000;">Width</div>
<div class="a" style="left:958px;top:192px;width:104px;height:23px;background:#fcfce6"></div>
<div class="a" style="left:1063px;top:192px;width:105px;height:23px;background:#fcfce6"></div>
<div class="a" style="left:958px;top:215px;width:210px;height:1px;background:#d4d4c0"></div>
<div class="tx" style="left:962px;top:198.10px;font-size:11.7px;color:#000;">Height</div>
<div class="a" style="left:958px;top:216px;width:104px;height:23px;background:#fdfcc9"></div>
<div class="a" style="left:1063px;top:216px;width:105px;height:23px;background:#fdfcc9"></div>
<div class="a" style="left:958px;top:239px;width:210px;height:1px;background:#d4d4c0"></div>
<div class="tx" style="left:962px;top:222.10px;font-size:11.7px;color:#000;">Name</div>
<div class="a" style="left:958px;top:240px;width:104px;height:23px;background:#fcfce6"></div>
<div class="a" style="left:1063px;top:240px;width:105px;height:23px;background:#fcfce6"></div>
<div class="a" style="left:958px;top:263px;width:210px;height:1px;background:#d4d4c0"></div>
<div class="tx" style="left:962px;top:246.10px;font-size:11.7px;color:#000;">Font</div>
<div class="a" style="left:958px;top:264px;width:104px;height:23px;background:#fdfcc9"></div>
<div class="a" style="left:1063px;top:264px;width:105px;height:23px;background:#fdfcc9"></div>
<div class="a" style="left:958px;top:287px;width:210px;height:1px;background:#d4d4c0"></div>
<div class="tx" style="left:962px;top:270.10px;font-size:11.7px;color:#000;">Font Color</div>
<div class="a" style="left:958px;top:288px;width:104px;height:23px;background:#fcfce6"></div>
<div class="a" style="left:1063px;top:288px;width:105px;height:23px;background:#fcfce6"></div>
<div class="a" style="left:958px;top:311px;width:210px;height:1px;background:#d4d4c0"></div>
<div class="tx" style="left:962px;top:294.10px;font-size:11.7px;color:#000;">Back Color</div>
<div class="a" style="left:958px;top:312px;width:104px;height:23px;background:#fdfcc9"></div>
<div class="a" style="left:1063px;top:312px;width:105px;height:23px;background:#fdfcc9"></div>
<div class="a" style="left:958px;top:335px;width:210px;height:1px;background:#d4d4c0"></div>
<div class="tx" style="left:962px;top:318.10px;font-size:11.7px;color:#000;">Cursor</div>
<div class="a" style="left:958px;top:336px;width:104px;height:23px;background:#fcfce6"></div>
<div class="a" style="left:1063px;top:336px;width:105px;height:23px;background:#fcfce6"></div>
<div class="a" style="left:958px;top:359px;width:210px;height:1px;background:#d4d4c0"></div>
<div class="tx" style="left:962px;top:342.10px;font-size:11.7px;color:#000;">Enabled</div>
<div class="a" style="left:958px;top:360px;width:104px;height:23px;background:#fdfcc9"></div>
<div class="a" style="left:1063px;top:360px;width:105px;height:23px;background:#fdfcc9"></div>
<div class="a" style="left:958px;top:383px;width:210px;height:1px;background:#d4d4c0"></div>
<div class="tx" style="left:962px;top:366.10px;font-size:11.7px;color:#000;">Tool Tip</div>
<div class="a" style="left:958px;top:384px;width:210px;height:9px;background:#fcfce8"></div>
<div class="a" style="left:957px;top:393px;width:212px;height:1px;background:#b4b4a4"></div>
<div class="a" style="left:957px;top:394px;width:212px;height:1px;background:#f4f4f0"></div>
<div class="a" style="left:1167px;top:75px;width:1px;height:319px;background:#b8b8a8"></div>
<div class="tx" style="left:1066px;top:102.10px;font-size:11.7px;color:#000;">Widget</div>
<div class="a" style="left:1064px;top:121px;width:102px;height:21px;border:1px solid #bdbdac;border-radius:3px;background:#fdfde6"></div>
<div class="a" style="left:1151px;top:122px;width:1px;height:19px;background:#d0d0c0"></div>
<div class="a" style="left:1152px;top:122px;width:13px;height:19px;background:#fafaf0;border-radius:0 2px 2px 0"></div>
<div class="a" style="left:1154px;top:125px;width:0;height:0;border-left:4.0px solid transparent;border-right:4.0px solid transparent;border-bottom:4px solid #666"></div>
<div class="a" style="left:1154px;top:133px;width:0;height:0;border-left:4.0px solid transparent;border-right:4.0px solid transparent;border-top:4px solid #666"></div>
<div class="tx" style="left:1067px;top:126.69px;font-size:11px;color:#000;">0</div>
<div class="a" style="left:1064px;top:145px;width:102px;height:21px;border:1px solid #bdbdac;border-radius:3px;background:#fdfde6"></div>
<div class="a" style="left:1151px;top:146px;width:1px;height:19px;background:#d0d0c0"></div>
<div class="a" style="left:1152px;top:146px;width:13px;height:19px;background:#fafaf0;border-radius:0 2px 2px 0"></div>
<div class="a" style="left:1154px;top:149px;width:0;height:0;border-left:4.0px solid transparent;border-right:4.0px solid transparent;border-bottom:4px solid #666"></div>
<div class="a" style="left:1154px;top:157px;width:0;height:0;border-left:4.0px solid transparent;border-right:4.0px solid transparent;border-top:4px solid #666"></div>
<div class="tx" style="left:1067px;top:150.69px;font-size:11px;color:#000;">0</div>
<div class="a" style="left:1064px;top:169px;width:102px;height:21px;border:1px solid #bdbdac;border-radius:3px;background:#fdfde6"></div>
<div class="a" style="left:1151px;top:170px;width:1px;height:19px;background:#d0d0c0"></div>
<div class="a" style="left:1152px;top:170px;width:13px;height:19px;background:#fafaf0;border-radius:0 2px 2px 0"></div>
<div class="a" style="left:1154px;top:173px;width:0;height:0;border-left:4.0px solid transparent;border-right:4.0px solid transparent;border-bottom:4px solid #666"></div>
<div class="a" style="left:1154px;top:181px;width:0;height:0;border-left:4.0px solid transparent;border-right:4.0px solid transparent;border-top:4px solid #666"></div>
<div class="tx" style="left:1067px;top:174.69px;font-size:11px;color:#000;">730</div>
<div class="a" style="left:1064px;top:193px;width:102px;height:21px;border:1px solid #bdbdac;border-radius:3px;background:#fdfde6"></div>
<div class="a" style="left:1151px;top:194px;width:1px;height:19px;background:#d0d0c0"></div>
<div class="a" style="left:1152px;top:194px;width:13px;height:19px;background:#fafaf0;border-radius:0 2px 2px 0"></div>
<div class="a" style="left:1154px;top:197px;width:0;height:0;border-left:4.0px solid transparent;border-right:4.0px solid transparent;border-bottom:4px solid #666"></div>
<div class="a" style="left:1154px;top:205px;width:0;height:0;border-left:4.0px solid transparent;border-right:4.0px solid transparent;border-top:4px solid #666"></div>
<div class="tx" style="left:1067px;top:198.69px;font-size:11px;color:#000;">660</div>
<div class="a" style="left:1064px;top:217px;width:102px;height:22px;border:1px solid #c4c4b4;border-radius:3px;background:#fdfde6"></div>
<div class="tx" style="left:1066px;top:222.69px;font-size:11px;color:#000;">w1</div>
<div class="a" style="left:1063px;top:288px;width:103px;height:23px;border:1px solid #2c2c2c;border-radius:3px;background:linear-gradient(#5a5a5a,#484848)"></div>
<div class="a" style="left:1064px;top:313px;width:102px;height:22px;border:1px solid #d0d0c0;border-radius:3px;background:linear-gradient(#fefefe,#f4f4ec)"></div>
<div class="tx" style="left:1067px;top:318.69px;font-size:11px;color:#000;">arrow</div>
<div class="a" style="left:1151px;top:322px;width:0;height:0;border-left:4.0px solid transparent;border-right:4.0px solid transparent;border-top:4px solid #666"></div>
<div class="a" style="left:1063px;top:340px;width:14px;height:14px;border:1px solid #d0d0c0;background:#fdfdf0"></div>
<svg class="a" style="left:1063px;top:340px" width="14" height="14"><path d="M3 7.5L5.5 11.5L10.5 3" fill="none" stroke="#000" stroke-width="1.8"/></svg>
<div class="a" style="left:957px;top:395px;width:212px;height:150px;background:#dcfddc;border:1px solid #a8c4a8"></div>
<div class="a" style="left:958px;top:396px;width:104px;height:23px;background:#dcfddc"></div>
<div class="a" style="left:958px;top:419px;width:210px;height:1px;background:#b4d4b4"></div>
<div class="tx" style="left:961px;top:402.10px;font-size:11.7px;color:#000;">Title</div>
<div class="a" style="left:958px;top:420px;width:104px;height:23px;background:#bdfdc0"></div>
<div class="a" style="left:958px;top:443px;width:210px;height:1px;background:#b4d4b4"></div>
<div class="tx" style="left:961px;top:426.10px;font-size:11.7px;color:#000;">Layout</div>
<div class="a" style="left:958px;top:444px;width:104px;height:23px;background:#dcfddc"></div>
<div class="a" style="left:958px;top:467px;width:210px;height:1px;background:#b4d4b4"></div>
<div class="tx" style="left:961px;top:450.10px;font-size:11.7px;color:#000;">Event Function</div>
<div class="a" style="left:1062px;top:396px;width:1px;height:71px;background:#b4d4b4"></div>
<div class="a" style="left:1064px;top:397px;width:102px;height:22px;border:1px solid #a8c0a8;border-radius:3px;background:#d8f8d8"></div>
<div class="a" style="left:1064px;top:421px;width:102px;height:22px;border:1px solid #b0c4b0;border-radius:3px;background:linear-gradient(#fcfcfc,#e6f0e6)"></div>
<div class="a" style="left:1151px;top:430px;width:0;height:0;border-left:4.0px solid transparent;border-right:4.0px solid transparent;border-top:4px solid #555"></div>
<div class="tx" style="left:959.5px;top:547.66px;font-size:10.8px;color:#c4c4c4;">Event Functions</div>
<div class="a" style="left:958px;top:564px;width:211px;height:111px;border:1px solid #4a4a4a;border-radius:3px"></div>
<div class="a" style="left:960px;top:572px;width:206px;height:45px;background:#f3deff"></div>
<div class="a" style="left:960px;top:623px;width:120px;height:22px;border:1px solid #2e2e2e;border-radius:3px;background:#3c3c3c"></div>
<div class="a" style="left:1086px;top:623px;width:80px;height:21px;border-radius:4px;background:#2e2e2e"></div>
<div class="a" style="left:1087px;top:624px;width:78px;height:19px;border:1px solid #5a5a5a;border-radius:3px;background:linear-gradient(#525252,#484848)"></div>
<div class="tx" style="left:1087px;width:78px;text-align:center;top:628.94px;font-size:10.7px;color:#d8d8d8;">Add New</div>
<div class="a" style="left:1083px;top:651px;width:83px;height:21px;border-radius:4px;background:#2e2e2e"></div>
<div class="a" style="left:1084px;top:652px;width:81px;height:19px;border:1px solid #5a5a5a;border-radius:3px;background:linear-gradient(#525252,#484848)"></div>
<div class="tx" style="left:1084px;width:81px;text-align:center;top:656.64px;font-size:10.7px;color:#d8d8d8;">Delete Selected</div>
<div class="a" style="left:957px;top:680px;width:105px;height:21px;border-radius:4px;background:#2e2e2e"></div>
<div class="a" style="left:958px;top:681px;width:103px;height:19px;border:1px solid #5a5a5a;border-radius:3px;background:linear-gradient(#525252,#484848)"></div>
<div class="tx" style="left:958px;width:103px;text-align:center;top:685.77px;font-size:10.9px;color:#d8d8d8;">Preview Widget</div>
<div class="a" style="left:1062px;top:680px;width:105px;height:21px;border-radius:4px;background:#2e2e2e"></div>
<div class="a" style="left:1063px;top:681px;width:103px;height:19px;border:1px solid #5a5a5a;border-radius:3px;background:linear-gradient(#525252,#484848)"></div>
<div class="tx" style="left:1063px;width:103px;text-align:center;top:685.94px;font-size:10.7px;color:#d8d8d8;">Resources</div>
<div class="a" style="left:957px;top:710px;width:106px;height:21px;border-radius:4px;background:#2e2e2e"></div>
<div class="a" style="left:958px;top:711px;width:104px;height:19px;border:1px solid #5a5a5a;border-radius:3px;background:linear-gradient(#525252,#484848)"></div>
<div class="tx" style="left:958px;width:104px;text-align:center;top:715.94px;font-size:10.7px;color:#d8d8d8;">Done</div>
<div class="a" style="left:1063px;top:710px;width:106px;height:21px;border-radius:4px;background:#2e2e2e"></div>
<div class="a" style="left:1064px;top:711px;width:104px;height:19px;border:1px solid #5a5a5a;border-radius:3px;background:linear-gradient(#525252,#484848)"></div>
<div class="tx" style="left:1064px;width:104px;text-align:center;top:715.94px;font-size:10.7px;color:#d8d8d8;">Cancel</div>
</body></html>
